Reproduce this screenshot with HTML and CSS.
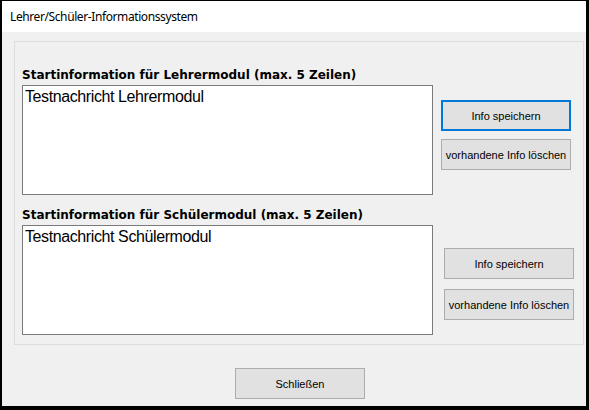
FILE: index.html
```html
<!DOCTYPE html>
<html lang="de">
<head>
<meta charset="utf-8">
<title>Lehrer/Schüler-Informationssystem</title>
<link rel="stylesheet" href="styles.css">
</head>
<body>
<div class="window">
  <div class="titlebar">Lehrer/Schüler-Informationssystem</div>
  <div class="client">
    <div class="panel">
      <div class="section first">
        <div class="field">
          <div class="label">Startinformation für Lehrermodul (max. 5 Zeilen)</div>
          <div class="textbox">Testnachricht Lehrermodul</div>
        </div>
        <div class="actions a1">
          <button class="btn focused">Info speichern</button>
          <button class="btn">vorhandene Info löschen</button>
        </div>
      </div>
      <div class="section second">
        <div class="field">
          <div class="label">Startinformation für Schülermodul (max. 5 Zeilen)</div>
          <div class="textbox">Testnachricht Schülermodul</div>
        </div>
        <div class="actions a2">
          <button class="btn">Info speichern</button>
          <button class="btn">vorhandene Info löschen</button>
        </div>
      </div>
    </div>
    <div class="footer">
      <button class="btn close">Schließen</button>
    </div>
  </div>
</div>
</body>
</html>
```

FILE: styles.css
```css
* { box-sizing: border-box; }
html, body { margin: 0; padding: 0; background: #000; }
.window {
  width: 589px;
  height: 410px;
  border-top: 1px solid #000;
  border-left: 2px solid #000;
  border-right: 3px solid #000;
  border-bottom: 4px solid #000;
  background: #f0f0f0;
  display: flex;
  flex-direction: column;
  overflow: hidden;
}
.titlebar {
  height: 31px;
  background: #fff;
  font-family: "Noto Sans", "Open Sans", sans-serif;
  font-size: 12px;
  letter-spacing: -0.4px;
  line-height: 31px;
  color: #000;
  padding-left: 8px;
  flex: none;
}
.client {
  flex: 1;
  background: #f0f0f0;
  display: flex;
  flex-direction: column;
}
.panel {
  margin: 9px 2px 0 12px;
  height: 304px;
  border: 1px solid #dcdcdc;
  padding: 0 0 0 7px;
  display: flex;
  flex-direction: column;
}
.section { display: flex; align-items: flex-start; }
.section.first { margin-top: 25px; }
.section.second { margin-top: 12px; }
.field { display: flex; flex-direction: column; }
.label {
  font-family: "DejaVu Sans", Verdana, sans-serif;
  font-weight: bold;
  font-size: 12px;
  line-height: 17px;
  height: 18px;
  color: #000;
  padding-left: 0;
}
.textbox {
  width: 411px;
  height: 110px;
  background: #fff;
  border: 1px solid #7a7a7a;
  padding: 2px 2px;
  font-family: "Liberation Sans", Arial, sans-serif;
  font-size: 16px;
  letter-spacing: -0.4px;
  color: #000;
}
.actions { display: flex; flex-direction: column; }
.actions.a1 { margin-left: 8px; margin-top: 33px; gap: 8px; }
.actions.a2 { margin-left: 11px; margin-top: 41px; gap: 10px; }
.btn {
  width: 130px;
  height: 31px;
  background: #e1e1e1;
  border: 1px solid #adadad;
  font-family: "Liberation Sans", Arial, sans-serif;
  font-size: 11px;
  color: #000;
  padding: 0;
  margin: 0;
  border-radius: 0;
}
.btn.focused { border: 2px solid #0078d7; }
.footer {
  display: flex;
  padding-left: 233px;
  margin-top: 23px;
}
```
